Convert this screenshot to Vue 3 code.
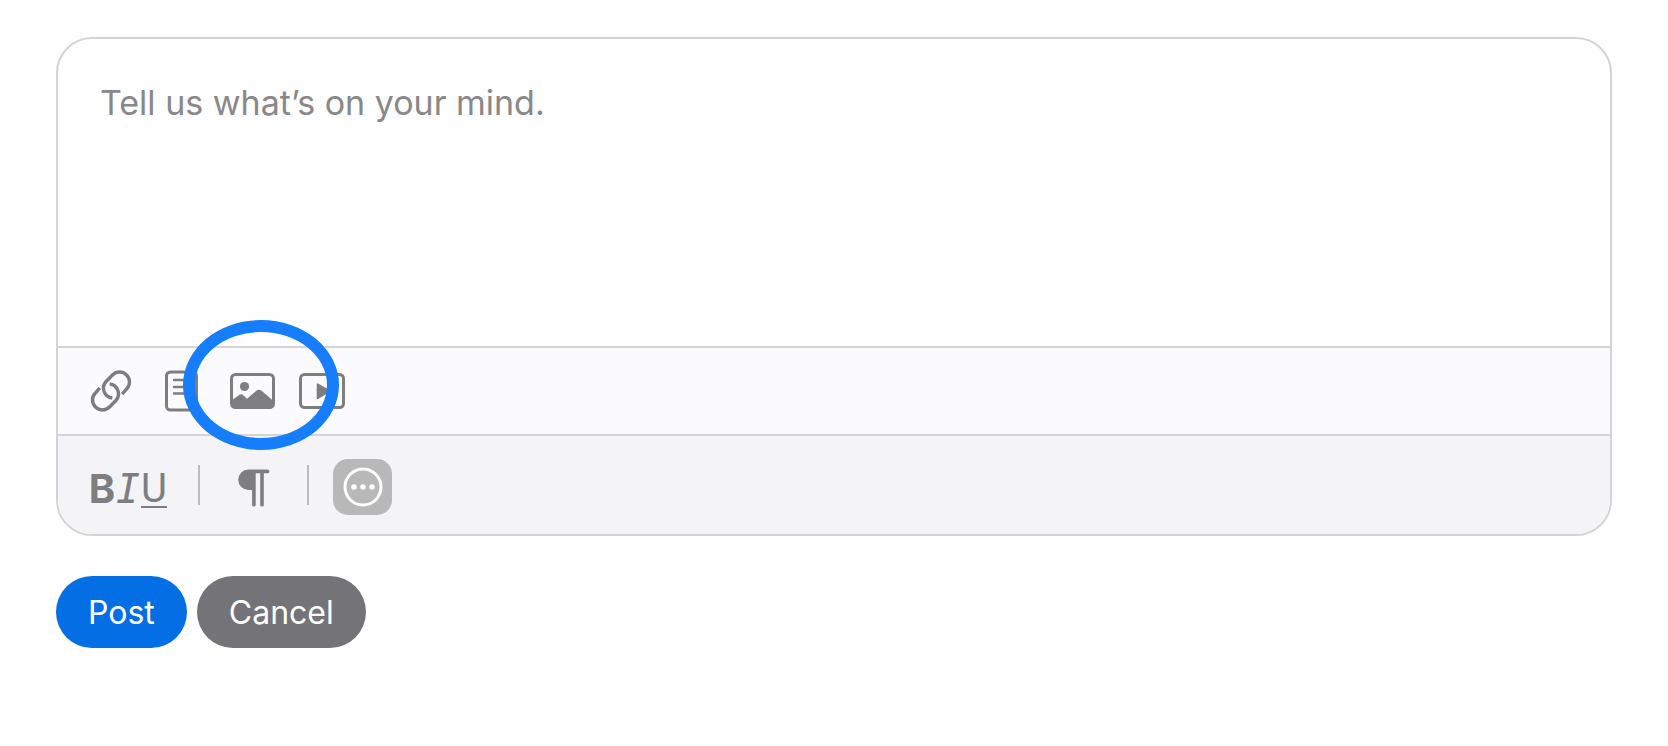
<template>
  <main class="composer">
    <form @submit.prevent="submitPost">
      <div class="editor">
        <textarea
          v-model="message"
          class="message"
          aria-label="Message"
          placeholder="Tell us what’s on your mind."
        ></textarea>

        <div class="toolbar insert-bar">
          <button type="button" class="tool" aria-label="Insert link">
            <svg width="46" height="46" viewBox="-22 -23 46 46">
              <g class="outline chain">
                <path :d="linkPath" />
                <path :d="linkPath" transform="rotate(180)" />
              </g>
            </svg>
          </button>
          <button type="button" class="tool" aria-label="Insert document">
            <svg width="46" height="46" viewBox="0 0 46 46">
              <g class="outline">
                <rect x="7.500" y="4" width="30" height="38" rx="4" />
                <path d="M15 12H30M15 19H30M15 25.500H25" stroke-width="2.400" />
              </g>
            </svg>
          </button>
          <button type="button" class="tool" aria-label="Insert image">
            <svg width="46" height="46" viewBox="0 0 46 46">
              <rect class="outline" x="2.500" y="6.500" width="42" height="33" rx="4" />
              <circle cx="15.500" cy="18.500" r="4.600" />
              <path d="M2.500 32.500L10.500 26.800Q12.300 25.600 14 27L18 30.700L27.300 22.700Q30 20.700 32.600 22.700L44.500 33V36Q44.500 39.500 41 39.500H6Q2.500 39.500 2.500 36Z" />
            </svg>
          </button>
          <button type="button" class="tool" aria-label="Insert video">
            <svg width="46" height="46" viewBox="0 0 46 46">
              <rect class="outline" x="1.500" y="6.500" width="43" height="33" rx="4" />
              <path d="M17.700 16.200Q17.700 14.700 19.100 15.500L31 22.200Q32.200 23 31 23.800L19.100 31Q17.700 31.700 17.700 30.200Z" />
            </svg>
          </button>
          <span class="highlight"></span>
        </div>

        <div class="toolbar format-bar">
          <div class="letters">
            <button
              v-for="format in formats"
              :key="format.label"
              type="button"
              :class="['letter', format.name]"
              :aria-label="format.name"
            >
              <span>{{ format.label }}</span>
            </button>
          </div>
          <span class="separator"></span>
          <button type="button" class="tool" aria-label="Paragraph style">
            <svg width="52" height="40" viewBox="0 0 52 40">
              <path d="M24.500 2.500H43.500A1.700 1.700 0 0 1 43.500 6.300H39.800V38Q39.800 39.500 38 39.500T36.200 38V6.300H31.700V38Q31.700 39.500 29.900 39.500T28.100 38V23H24.500A10.250 10.250 0 0 1 24.500 2.500Z" />
            </svg>
          </button>
          <span class="separator"></span>
          <button type="button" class="more" aria-label="More options">
            <svg width="40" height="40" viewBox="0 0 40 40">
              <circle cx="20" cy="20" r="18" fill="none" stroke="#fff" stroke-width="3" />
              <circle v-for="x in [11, 20, 29]" :key="x" :cx="x" cy="20" r="2.800" fill="#fff" />
            </svg>
          </button>
        </div>
      </div>

      <div class="actions">
        <button type="submit" class="pill post">Post</button>
        <button type="button" class="pill cancel" @click="message = ''">Cancel</button>
      </div>
    </form>
  </main>
</template>

<script setup>
import { ref } from 'vue';

const message = ref('');

const formats = [
  { label: 'B', name: 'bold' },
  { label: 'I', name: 'italic' },
  { label: 'U', name: 'underline' }
];

// Half of the chain, the other half is the same shape turned around
const linkPath = 'M11.200 3.200L15.600 -2A9.900 9.900 0 0 0 1.500 -16L-4.900 -9.500A9.900 9.900 0 0 0 1.300 7';

const submitPost = () => {
  message.value = '';
};
</script>

<style>
body {
  margin: 0;
  background-color: #fefefe;
}
</style>

<style scoped>
.composer {
  padding: 37px 56px;
  font-family: Inter, "Liberation Sans", sans-serif;
}

button {
  margin: 0;
  padding: 0;
  border: none;
  background: none;
  font-family: inherit;
  cursor: pointer;
}

svg {
  display: block;
}

.editor {
  overflow: hidden;
  border: 2px solid #d4d4d6;
  border-radius: 36px;
}

.message {
  display: block;
  box-sizing: border-box;
  width: 100%;
  height: 307px;
  padding: 40px 42px;
  border: none;
  outline: none;
  resize: none;
  background: transparent;
  color: #1d1d1f;
  font-family: inherit;
  font-size: 34px;
  line-height: 48px;
}

.message::placeholder {
  color: #888;
  opacity: 1;
}

.toolbar {
  display: flex;
  align-items: center;
  gap: 24px;
  padding: 0 31px;
  border-top: 2px solid #d4d4d6;
}

.insert-bar {
  position: relative;
  height: 86px;
  background-color: #fbfbfd;
}

.format-bar {
  height: 94px;
  padding-top: 4px;
  background-color: #f4f4f7;
}

.tool {
  color: #7e7e80;
  fill: currentColor;
}

.outline {
  fill: none;
  stroke: currentColor;
  stroke-width: 3;
  stroke-linecap: round;
}

.chain {
  stroke-width: 3.4;
  stroke-linecap: butt;
}

/* Ring around the image button */
.highlight {
  position: absolute;
  top: -28px;
  left: 125px;
  box-sizing: border-box;
  width: 156px;
  height: 130px;
  border: 12px solid #167efc;
  border-radius: 50%;
  pointer-events: none;
}

.letters {
  display: flex;
  padding-top: 4px;
}

.letter {
  display: flex;
  justify-content: center;
  width: 26px;
  color: #7e7e80;
  font-family: Roboto, sans-serif;
  font-size: 40px;
  line-height: 42px;
}

.bold {
  font-family: Inter, sans-serif;
  font-weight: 700;
}

.italic {
  font-family: "DejaVu Sans Mono", monospace;
  font-style: italic;
}

.underline span {
  text-decoration: underline;
  text-decoration-thickness: 2px;
  text-underline-offset: 4px;
}

.separator {
  width: 2px;
  height: 40px;
  margin: 0 0 4px 7px;
  background-color: #bcbcbe;
}

.more {
  display: flex;
  align-items: center;
  justify-content: center;
  width: 59px;
  height: 56px;
  border-radius: 15px;
  background-color: #b8b8b8;
}

.actions {
  display: flex;
  gap: 10px;
  margin-top: 40px;
}

.pill {
  height: 72px;
  padding: 0 32px;
  border-radius: 36px;
  color: #fff;
  font-size: 32px;
}

.post {
  background-color: #046ee5;
}

.cancel {
  background-color: #747378;
}
</style>
